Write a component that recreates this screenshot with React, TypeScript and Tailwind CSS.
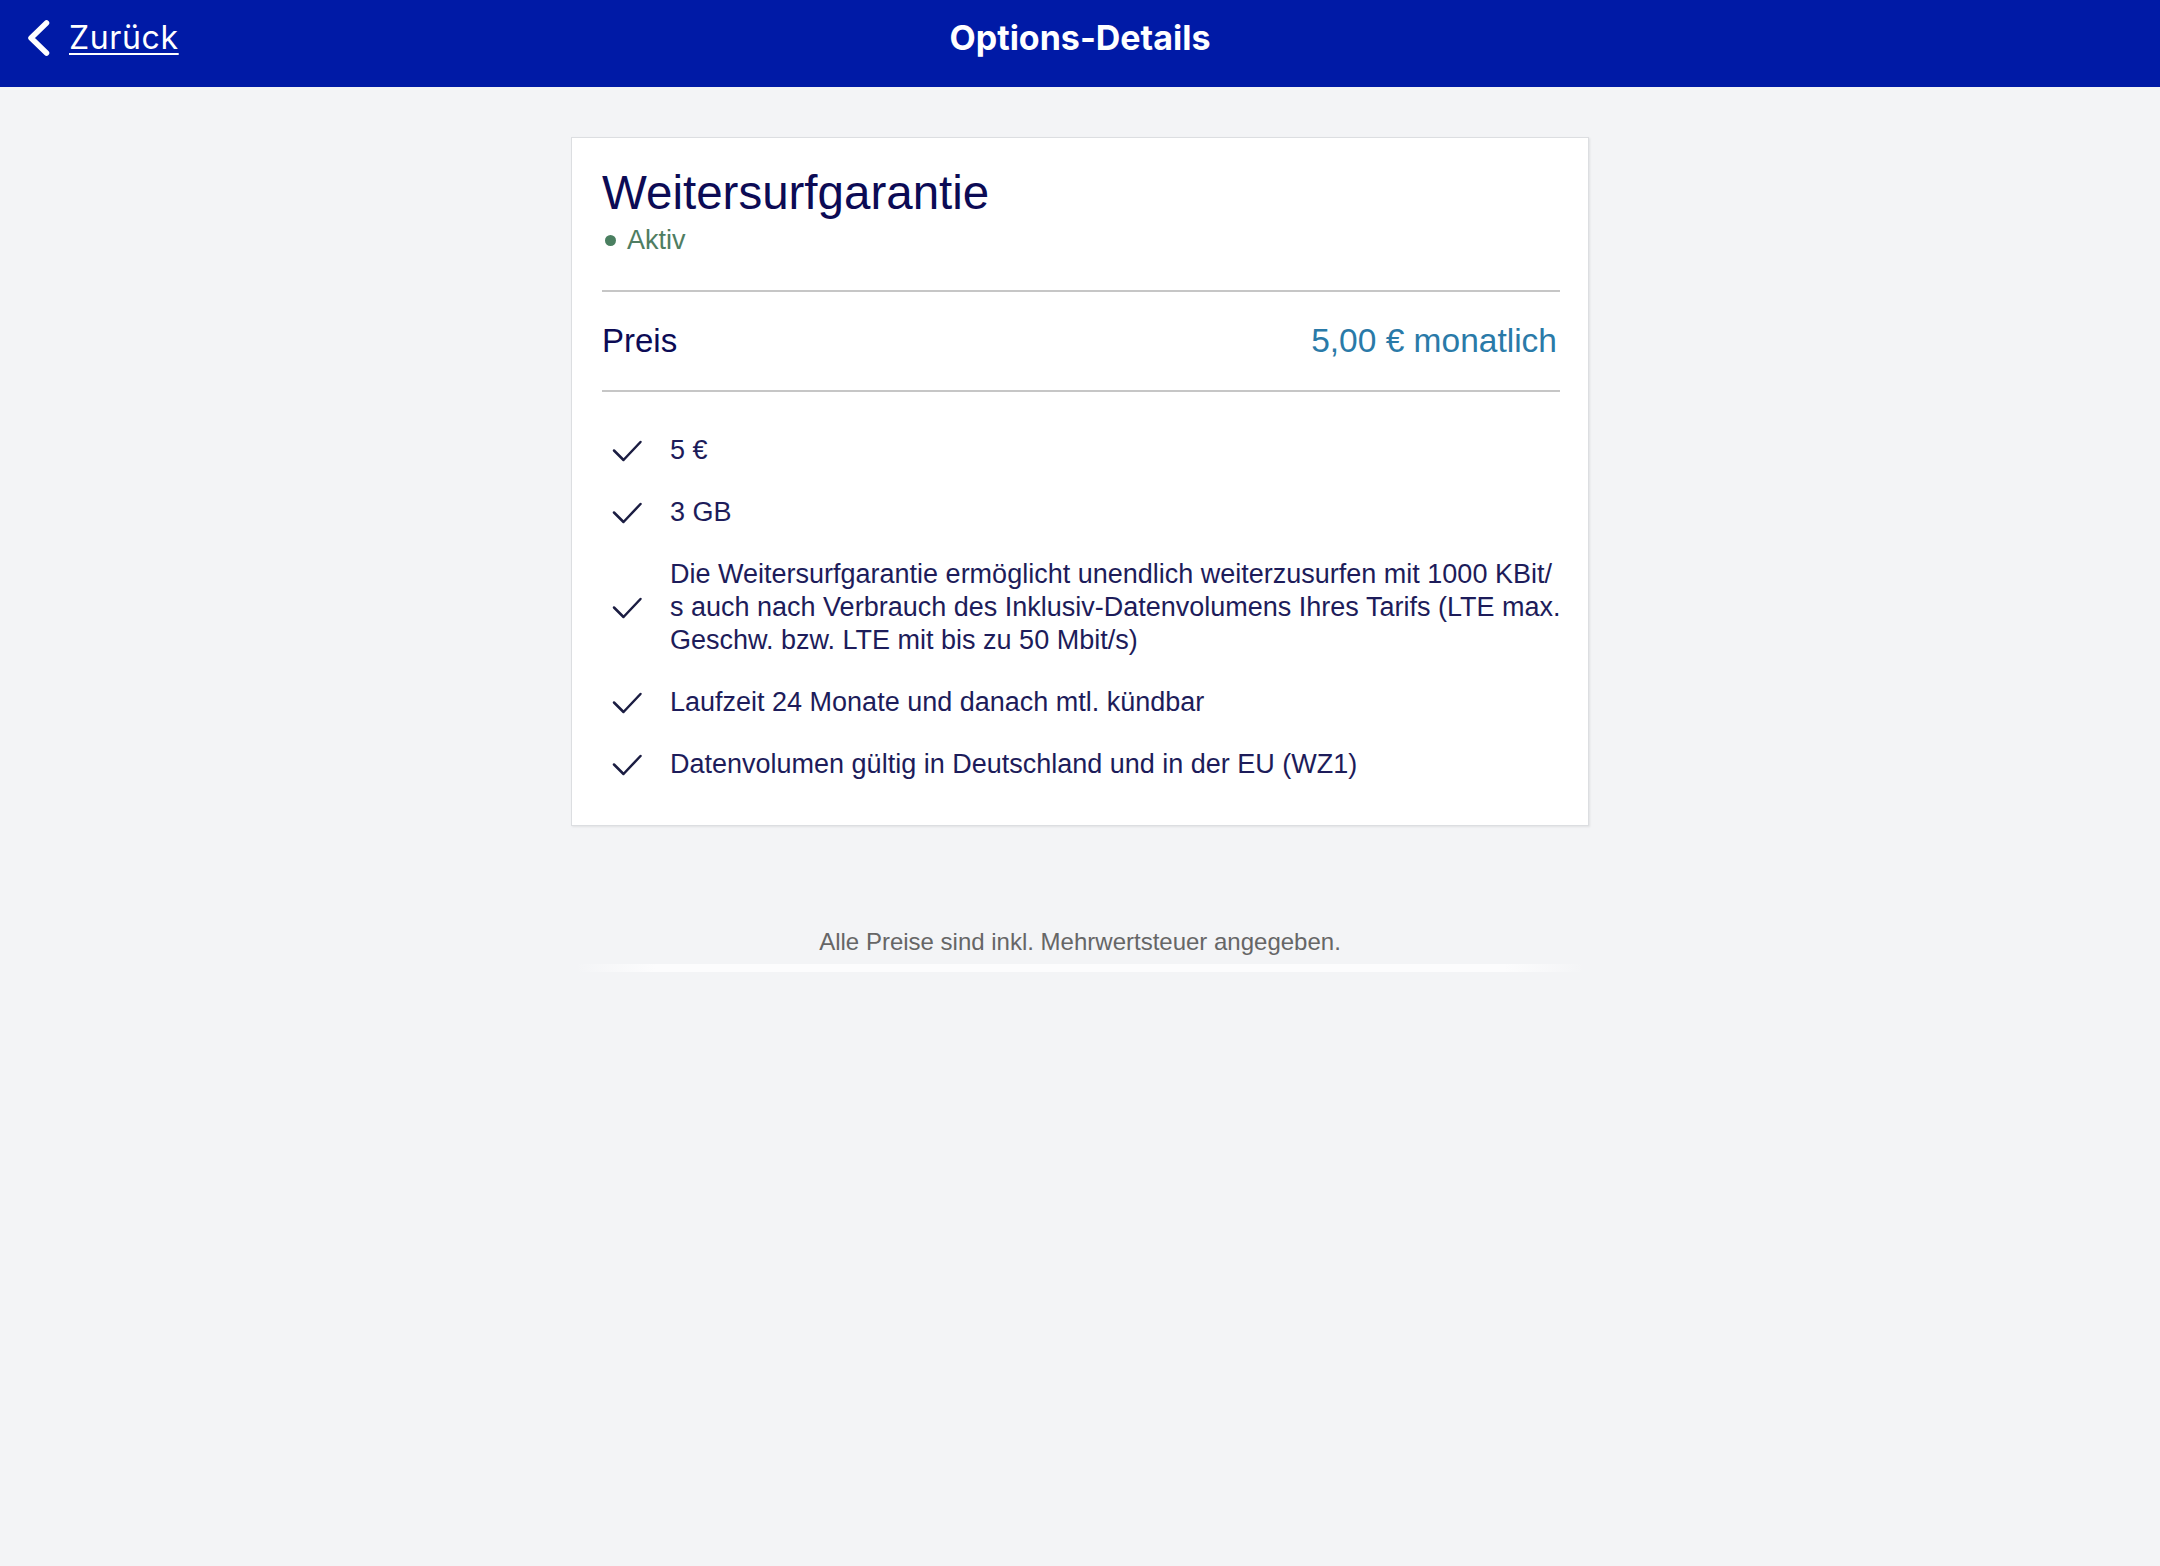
import React from "react";

function Check() {
  return (
    <svg
      width="30"
      height="22"
      viewBox="0 0 30 22"
      fill="none"
      className="ml-[10px] shrink-0 overflow-visible"
    >
      <path
        d="M2 10.5 L11.5 20 L28.5 2"
        stroke="#1b1d42"
        strokeWidth="2.5"
        strokeLinecap="round"
        strokeLinejoin="round"
      />
    </svg>
  );
}

export default function App() {
  const items: string[][] = [
    ["5 €"],
    ["3 GB"],
    [
      "Die Weitersurfgarantie ermöglicht unendlich weiterzusurfen mit 1000 KBit/",
      "s auch nach Verbrauch des Inklusiv-Datenvolumens Ihres Tarifs (LTE max.",
      "Geschw. bzw. LTE mit bis zu 50 Mbit/s)",
    ],
    ["Laufzeit 24 Monate und danach mtl. kündbar"],
    ["Datenvolumen gültig in Deutschland und in der EU (WZ1)"],
  ];

  return (
    <div className="min-h-screen w-full bg-[#f3f4f6]">
      <header className="h-[87px] bg-[#001aa6] font-['Inter',sans-serif] text-white">
        <div className="grid h-[75px] grid-cols-[1fr_auto_1fr] items-center">
          <a className="flex items-center gap-[19px] justify-self-start pl-[26px]">
            <svg width="24" height="38" viewBox="0 0 24 38" fill="none">
              <path
                d="M20.5 4 L5 19 L20.5 34"
                stroke="white"
                strokeWidth="5.5"
                strokeLinecap="round"
                strokeLinejoin="round"
              />
            </svg>
            <span className="text-[32px] leading-[36px] tracking-[0.02em] underline decoration-[2px] underline-offset-[4px]">
              Zurück
            </span>
          </a>
          <h1 className="text-[34px] font-bold leading-[40px]">Options-Details</h1>
          <div />
        </div>
      </header>

      <main className="flex flex-col items-center pt-[50px] font-['Liberation_Sans',Arial,sans-serif]">
        <section className="w-[1018px] border border-[#dcdee1] bg-white pb-[44px] pl-[30px] pr-[28px] pt-[27px] shadow-[1px_1px_2px_rgba(0,0,0,0.08)]">
          <h2 className="text-[47.5px] leading-[56px] text-[#0c0b55]">Weitersurfgarantie</h2>
          <div className="mt-[3px] flex items-center gap-[11px] text-[27px] leading-[32px] text-[#4f7d62]">
            <span className="ml-[3px] h-[11px] w-[11px] rounded-full bg-[#4a7f60]" />
            <span>Aktiv</span>
          </div>
          <div className="mt-[34px] h-[2px] bg-[#c6c6c6]" />
          <div className="flex h-[98px] items-center justify-between">
            <span className="text-[33px] leading-[40px] text-[#0c0b55]">Preis</span>
            <span className="pr-[3px] text-[33.5px] leading-[40px] text-[#2a7aa8]">
              5,00 € monatlich
            </span>
          </div>
          <div className="h-[2px] bg-[#c6c6c6]" />
          <ul className="mt-[42px] flex flex-col gap-[29px]">
            {items.map((lines, i) => (
              <li key={i} className="flex items-center gap-[28px]">
                <Check />
                <div className="text-[27px] leading-[33px] text-[#1d1c5a]">
                  {lines.map((l, j) => (
                    <div key={j} className="whitespace-nowrap">
                      {l}
                    </div>
                  ))}
                </div>
              </li>
            ))}
          </ul>
        </section>

        <p className="mt-[102px] text-[24px] leading-[28px] text-[#666666]">
          Alle Preise sind inkl. Mehrwertsteuer angegeben.
        </p>
        <div className="mt-[8px] h-[8px] w-[1010px] bg-[linear-gradient(to_right,transparent,#fcfcfd_8%,#fcfcfd_92%,transparent)]" />
      </main>
    </div>
  );
}
